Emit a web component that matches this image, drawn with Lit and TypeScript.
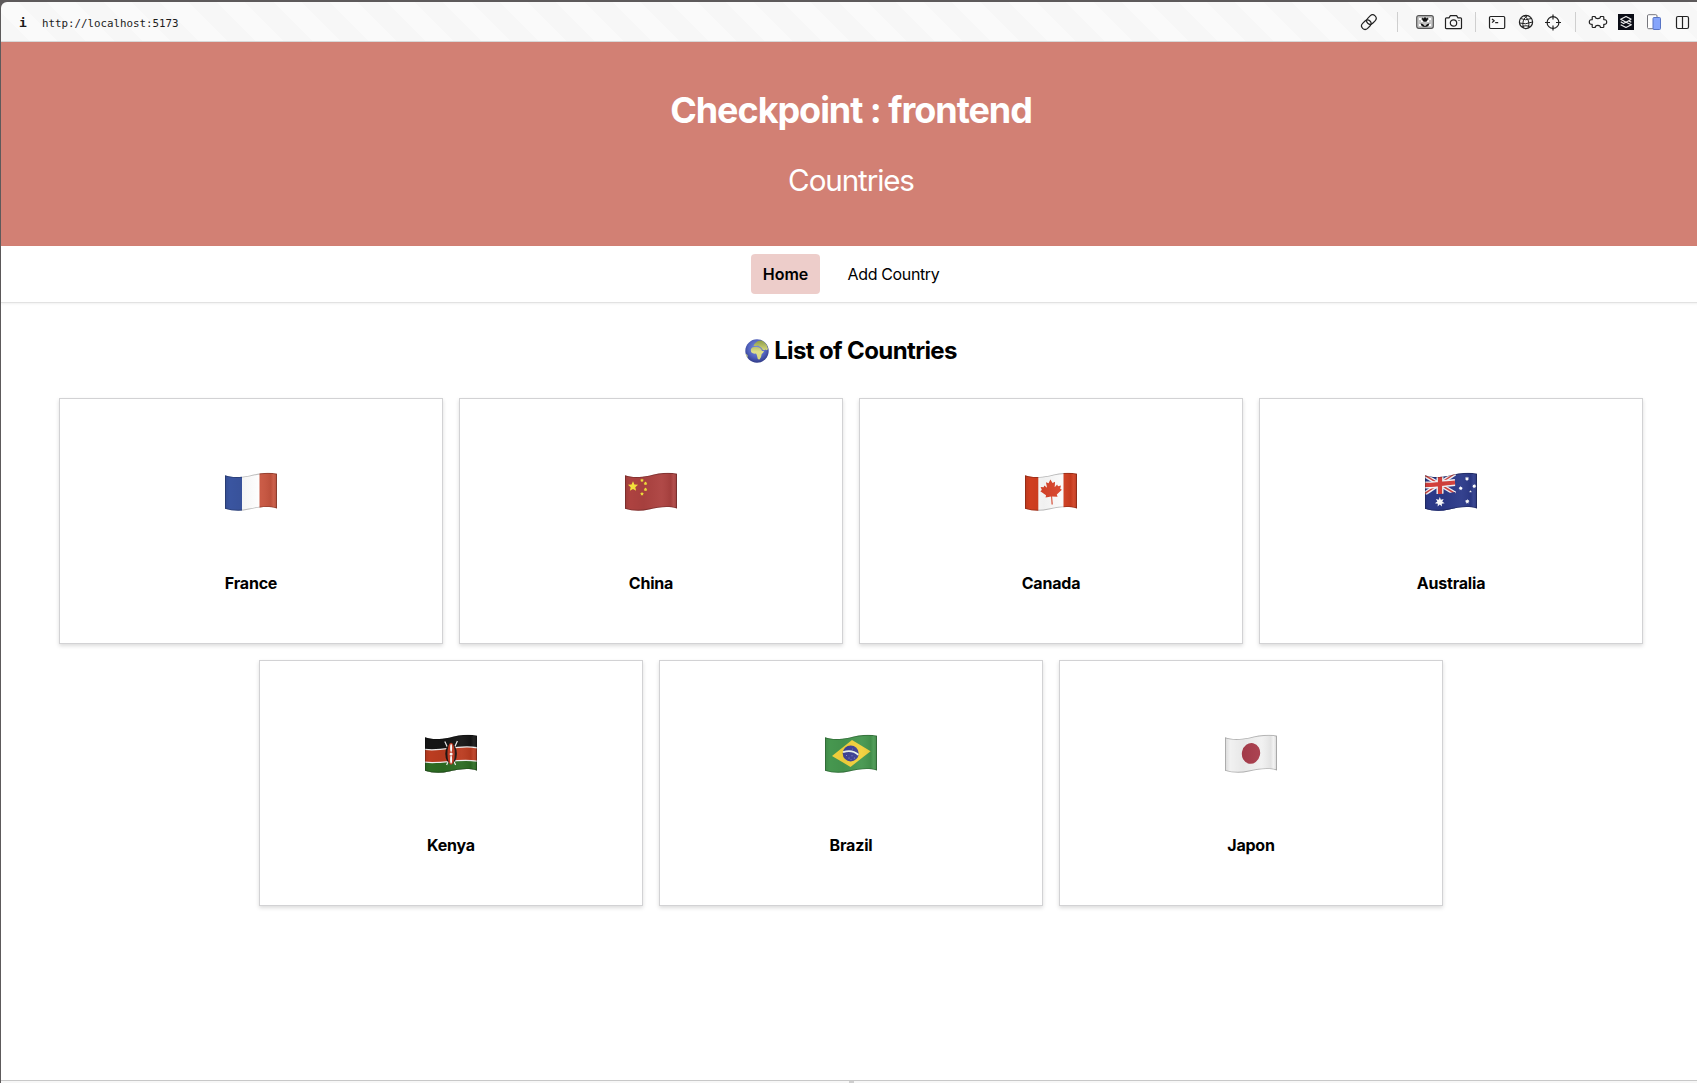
import { LitElement, html, css, svg } from "lit";
import { customElement, property } from "lit/decorators.js";

const WAVE =
  "M0 2.8C6 5 14 5.2 24 3.2C34 .6 43 -1 52 1.3V36C43 33.2 34 34.6 24 37C16 38.8 7 38.5 0 36.3Z";

const star = (cx: number, cy: number, r: number, n = 5, inner = 0.42, rot = 0) => {
  const pts: string[] = [];
  for (let i = 0; i < n * 2; i++) {
    const a = (Math.PI * i) / n - Math.PI / 2 + rot;
    const q = i % 2 ? r * inner : r;
    pts.push(`${(cx + q * Math.cos(a)).toFixed(2)},${(cy + q * Math.sin(a)).toFixed(2)}`);
  }
  return pts.join(" ");
};

const flags: Record<string, unknown> = {
  France: svg`
    <rect width="52" height="39" fill="#fff"/>
    <rect width="17" height="39" fill="#3a55a0"/>
    <rect x="34.5" width="18" height="39" fill="#c8553f"/>`,
  China: svg`
    <rect width="52" height="39" fill="#ad4240"/>
    <polygon points="${star(8, 14, 5.3, 5, 0.45)}" fill="#f4e23c"/>
    <polygon points="${star(17, 7.8, 1.9, 5, 0.6)}" fill="#f4e23c"/>
    <polygon points="${star(20.5, 11, 1.9, 5, 0.6)}" fill="#f4e23c"/>
    <polygon points="${star(20.5, 17, 1.9, 5, 0.6)}" fill="#f4e23c"/>
    <polygon points="${star(17, 21.4, 1.9, 5, 0.6)}" fill="#f4e23c"/>`,
  Canada: svg`
    <rect width="52" height="39" fill="#fafafa"/>
    <rect width="13.3" height="39" fill="#d03e20"/>
    <rect x="38.5" width="14" height="39" fill="#d03e20"/>
    <path transform="translate(26.2 19.5) rotate(-4)" fill="#d8442a"
      d="M0-12.5L2-8.8L4.6-10L3.8-4.6L6.4-7L7.2-5.2L10.2-5.8L9.2-2.6L10.8-1.4L5.4 3L6 5.2L.6 4.6L.7 12.5H-.5L-.4 4.6L-6 5.2L-5.4 3L-10.8-1.4L-9.2-2.6L-10.2-5.8L-7.2-5.2L-6.4-7L-3.8-4.6L-4.6-10L-2-8.8Z"/>`,
  Australia: svg`
    <rect width="52" height="39" fill="#2c3a8a"/>
    <path d="M0 3L30 21M0 21L30 1" stroke="#f5f5f8" stroke-width="4.2"/>
    <path d="M0 3L30 21M0 21L30 1" stroke="#cf4440" stroke-width="1.5"/>
    <path d="M15 0V21.5M0 12.4C10 13 20 10.5 30 10" stroke="#f5f5f8" stroke-width="7" fill="none"/>
    <path d="M15 0V21.5M0 12.4C10 13 20 10.5 30 10" stroke="#d5403c" stroke-width="4.2" fill="none"/>
    <path d="M0 22C10 23 20 21 30 19.5V39H0Z" fill="#2c3a8a"/>
    <g fill="#fff">
      <polygon points="${star(14.8, 29.6, 5, 7, 0.5)}"/>
      <polygon points="${star(42, 6.3, 2.3, 7, 0.55)}"/>
      <polygon points="${star(35.7, 15.8, 2.2, 7, 0.55)}"/>
      <polygon points="${star(49.3, 13.7, 2.2, 7, 0.55)}"/>
      <polygon points="${star(45.5, 19, 1.4)}"/>
      <polygon points="${star(42.3, 29, 2.4, 7, 0.55)}"/>
    </g>`,
  Kenya: svg`
    <rect width="52" height="39" fill="#151515"/>
    <path d="M0 14.3C16 16.5 34 9.5 52 12.6V39H0Z" fill="#f2f2f2"/>
    <path d="M0 15.6C16 17.8 34 10.8 52 13.9V26C34 23 16 29 0 27Z" fill="#bb3c20"/>
    <path d="M0 28.3C16 30.3 34 24.3 52 27.3V39H0Z" fill="#2c6b22"/>
    <path d="M19.8 7L30.6 30.5M32.4 6.5L21.6 30.5" stroke="#eee" stroke-width="1.2"/>
    <ellipse cx="26.1" cy="19.2" rx="5.8" ry="10" fill="#1c1412"/>
    <ellipse cx="26.1" cy="19.2" rx="3.7" ry="11" fill="#bf3a22"/>
    <ellipse cx="26.1" cy="13.5" rx="1" ry="4" fill="#fff"/>
    <ellipse cx="26.1" cy="25" rx="1" ry="4" fill="#fff"/>
    <circle cx="26.1" cy="19.4" r="1.5" fill="#fff"/>`,
  Brazil: svg`
    <rect width="52" height="39" fill="#46974f"/>
    <polygon points="7,21.5 27,5.4 45.6,16.8 25.5,32.4" fill="#f3d13c"/>
    <circle cx="25.7" cy="18.9" r="8" fill="#3f4196"/>
    <path d="M18 17.6Q27 14.6 33.4 20.2" stroke="#eef5f0" stroke-width="1.8" fill="none"/>
    <g fill="#a9aad6"><circle cx="21.5" cy="21" r=".5"/><circle cx="24" cy="23.5" r=".5"/>
    <circle cx="27" cy="21.2" r=".5"/><circle cx="29.3" cy="23.4" r=".5"/><circle cx="26" cy="25" r=".4"/><circle cx="27.5" cy="14.5" r=".4"/></g>`,
  Japon: svg`
    <rect width="52" height="39" fill="#f1f1f1"/>
    <ellipse cx="26" cy="18.9" rx="9.1" ry="10.5" fill="#a93d4c" transform="rotate(12 26 18.9)"/>`,
};

@customElement("country-card")
class CountryCard extends LitElement {
  @property() name = "";

  static styles = css`
    :host {
      box-sizing: border-box;
      width: 384px;
      height: 246px;
      border: 1px solid #d2d2d4;
      background: #fff;
      box-shadow: 0 2px 4px rgba(0, 0, 0, 0.14);
      display: flex;
      flex-direction: column;
      align-items: center;
      padding-top: 74px;
    }
    .flag {
      display: block;
      width: 52px;
      height: 39px;
      overflow: visible;
    }
    .name {
      margin-top: 61px;
      font-size: 16px;
      line-height: 20px;
      font-weight: 700;
      letter-spacing: -0.2px;
      color: #000;
    }
  `;

  render() {
    return html`
      <svg class="flag" viewBox="0 0.5 52 39">
        <defs>
          <clipPath id="wave"><path d=${WAVE} /></clipPath>
          <linearGradient id="fold">
            <stop offset="0" stop-color="#000" stop-opacity=".1" />
            <stop offset=".1" stop-color="#000" stop-opacity="0" />
            <stop offset=".35" stop-color="#000" stop-opacity=".04" />
            <stop offset=".7" stop-color="#fff" stop-opacity=".04" />
            <stop offset=".88" stop-color="#000" stop-opacity=".06" />
            <stop offset=".93" stop-color="#fff" stop-opacity=".06" />
            <stop offset="1" stop-color="#000" stop-opacity=".14" />
          </linearGradient>
        </defs>
        <g clip-path="url(#wave)">
          ${flags[this.name]}
          <rect width="52" height="39" fill="url(#fold)" />
          <path d=${WAVE} fill="none" stroke="#000" stroke-opacity=".24" stroke-width="1.8" />
        </g>
      </svg>
      <div class="name">${this.name}</div>
    `;
  }
}

interface Tool {
  gap: number;
  art?: unknown;
}

const tools: Tool[] = [
  {
    gap: 0,
    art: svg`<g transform="rotate(-45 10 10)"><rect x="1" y="6.500" width="10.400" height="7" rx="3.500"/><rect x="8.200" y="6.500" width="10.400" height="7" rx="3.500"/></g>`,
  },
  { gap: 18 },
  {
    gap: 17,
    art: svg`<rect x="1.700" y="3.700" width="16.600" height="12.600" rx="2" fill="#c4c4c4" stroke="#555"/>
      <path d="M4 6h2v2H4zM14 6h2v2h-2zM4 12h2v2H4zM14 12h2v2h-2zM6 8h2v2H6zM12 8h2v2h-2z" fill="#fff" stroke="none"/>
      <path d="M10 10v5M7 5.500l1.500 1L10 5l1.500 1.500L13 5.500c0 3-1 4.200-3 4.200S7 8.500 7 5.500ZM5.500 11.500C8 11.500 9 13 10 14.500C11 13 12 11.500 14.500 11.500C14 14 12 15 10 15S6 14 5.500 11.500Z" fill="#111" stroke="none"/>`,
  },
  {
    gap: 8,
    art: svg`<path d="M3.500 5.800H6L7.400 3.700H13.600L15 5.800H17.500Q18.500 5.800 18.500 6.800V15.700Q18.500 16.700 17.500 16.700H3.500Q2.500 16.700 2.500 15.700V6.800Q2.500 5.800 3.500 5.800Z"/><circle cx="10.500" cy="11" r="3.200"/><path d="M15.500 8.500h1"/>`,
  },
  { gap: 12 },
  {
    gap: 11,
    art: svg`<rect x="2.500" y="4.500" width="15.200" height="12" rx="1.200"/><path d="M5 7l2.200 1.800L5 10.600M8.200 10.700h3"/>`,
  },
  {
    gap: 9,
    art: svg`<circle cx="10" cy="10" r="6.600"/><path stroke-width="1" d="M4.500 6.500Q9 9 15.500 6.500M3.500 11Q9 13 16.500 10M5 14.500Q10 13 15 14.500M11.500 3.500Q5 8 7.500 16M8 3.700Q15 8 12 16.300"/>`,
  },
  {
    gap: 7,
    art: svg`<circle cx="10" cy="10.500" r="5.900"/><path d="M10 2.500v5M10 13.500v5M2 10.500h5M13 10.500h5"/>`,
  },
  { gap: 12 },
  {
    gap: 12,
    art: svg`<path d="M5 4.500H7.200Q7 6.600 9.800 6.600Q12.600 6.600 12.400 4.500H15Q15.800 4.500 15.800 5.300V7.600Q18.700 7.400 18.700 10Q18.700 12.600 15.800 12.400V14.700Q15.800 15.500 15 15.500H12.400Q12.600 13.400 9.800 13.400Q7 13.400 7.200 15.500H5Q4.200 15.500 4.200 14.700V12.400Q1.300 12.600 1.300 10Q1.300 7.400 4.200 7.600V5.300Q4.200 4.500 5 4.500Z"/>`,
  },
  {
    gap: 8,
    art: svg`<rect x="2" y="2" width="16" height="16" fill="#0b0d16" stroke="none"/><path d="M15.300 7.300L10 4.500L4.700 7.300L10 10.200L15.300 7.300M4.700 9.800L7.200 11.200M4.700 12.700L10 15.500L15.300 12.700L10 10.200L7 11.700M15.300 10.200L12.800 8.900" stroke="#eee" stroke-width="1.200"/>`,
  },
  {
    gap: 8,
    art: svg`<rect x="3.500" y="2.700" width="9.500" height="14" rx="1.200" fill="#fff" stroke="#77777d" stroke-width="1"/><rect x="9" y="5.500" width="7.500" height="12" rx="1" fill="#86a5fb" stroke="#5874c4" stroke-width="1"/>`,
  },
  {
    gap: 8,
    art: svg`<rect x="4.500" y="4.500" width="12" height="12" rx="1.500"/><path d="M10.500 4.500v12"/>`,
  },
];

@customElement("browser-bar")
class BrowserBar extends LitElement {
  static styles = css`
    :host {
      box-sizing: border-box;
      display: flex;
      align-items: center;
      height: 40px;
      padding: 1px 5px 0 18px;
      border-bottom: 1px solid #d8d8d8;
      border-top-left-radius: 6px;
      background: repeating-linear-gradient(45deg, #f7f7f7 0 20px, #fafafa 20px 40px);
      font-family: "DejaVu Sans Mono", monospace;
      color: #1c1c1c;
    }
    .info {
      width: 23px;
      padding-top: 1px;
      font-size: 13px;
      font-weight: 700;
    }
    .url {
      padding-top: 3px;
      font-size: 10.8px;
      line-height: 20px;
    }
    .tools {
      display: flex;
      align-items: center;
      margin-left: auto;
    }
    .icon {
      width: 20px;
      height: 20px;
      fill: none;
      stroke: #222;
      stroke-width: 1.2;
      stroke-linejoin: round;
    }
    .rule {
      width: 1px;
      height: 20px;
      background: #cfcfcf;
    }
  `;

  render() {
    return html`
      <span class="info">i</span>
      <span class="url">http://localhost:5173</span>
      <div class="tools">
        ${tools.map((t) =>
          t.art
            ? html`<svg class="icon" style="margin-left:${t.gap}px" viewBox="0 0 20 20">${t.art}</svg>`
            : html`<span class="rule" style="margin-left:${t.gap}px"></span>`
        )}
      </div>
    `;
  }
}

@customElement("app-root")
class AppRoot extends LitElement {
  static styles = css`
    :host {
      box-sizing: border-box;
      display: flex;
      flex-direction: column;
      width: 1697px;
      height: 1083px;
      overflow: hidden;
      padding: 2px 0 0 1px;
      background: #5d5a5b;
      font-family: Inter, "Liberation Sans", sans-serif;
      color: #000;
    }
    .page {
      flex: 1;
      width: 1700px;
      display: flex;
      flex-direction: column;
      background: #fff;
    }
    .hero {
      box-sizing: border-box;
      height: 204px;
      padding-top: 46px;
      background: #d28074;
      color: #fff;
      text-align: center;
    }
    .title {
      margin: 0;
      font-size: 36px;
      line-height: 44px;
      font-weight: 700;
      letter-spacing: -1.05px;
    }
    .subtitle {
      margin: 30px 0 0;
      font-size: 29.6px;
      line-height: 36px;
      letter-spacing: -1.1px;
    }
    .nav {
      box-sizing: border-box;
      height: 57px;
      display: flex;
      justify-content: center;
      gap: 16px;
      padding: 8px 0;
      border-bottom: 1px solid #e2e2e2;
      box-shadow: 0 1px 2px rgba(0, 0, 0, 0.06);
    }
    .link {
      display: flex;
      align-items: center;
      justify-content: center;
      box-sizing: border-box;
      height: 40px;
      font-size: 16px;
      border-radius: 4px;
    }
    .home {
      width: 69px;
      background: #edcdca;
      font-weight: 600;
    }
    .add {
      width: 115px;
      letter-spacing: -0.37px;
    }
    .heading {
      display: flex;
      align-items: center;
      justify-content: center;
      gap: 5px;
      margin: 32px 0 0;
      height: 32px;
      font-size: 24px;
      line-height: 32px;
      font-weight: 700;
      letter-spacing: -0.62px;
    }
    .globe {
      width: 24px;
      height: 24px;
      margin-top: -1px;
    }
    .cards {
      display: flex;
      flex-wrap: wrap;
      justify-content: center;
      gap: 16px;
      padding: 31px 40px 0;
    }
    .foot {
      display: flex;
      justify-content: center;
      margin-top: auto;
      height: 3px;
      box-sizing: border-box;
      border-top: 1px solid #c8c8c8;
      background: #f7f7f7;
    }
    .grip {
      width: 5px;
      height: 2px;
      background: #cfcfcf;
    }
  `;

  render() {
    return html`
      <browser-bar></browser-bar>
      <div class="page">
        <header class="hero">
          <h1 class="title">Checkpoint : frontend</h1>
          <p class="subtitle">Countries</p>
        </header>
        <nav class="nav">
          <a class="link home">Home</a>
          <a class="link add">Add Country</a>
        </nav>
        <h2 class="heading">
          <svg class="globe" viewBox="0 0 24 24">
            <defs>
              <radialGradient id="sea" cx=".5" cy=".4" r=".6">
                <stop offset="0" stop-color="#7f96dc" />
                <stop offset=".6" stop-color="#5364c0" />
                <stop offset="1" stop-color="#2f3a86" />
              </radialGradient>
              <linearGradient id="land" x2="0" y2="1">
                <stop offset="0" stop-color="#8d9c45" />
                <stop offset=".6" stop-color="#dfe08a" />
                <stop offset="1" stop-color="#d9d97a" />
              </linearGradient>
              <clipPath id="disc"><circle cx="12" cy="12" r="11.700" /></clipPath>
            </defs>
            <g clip-path="url(#disc)">
              <rect width="24" height="24" fill="url(#sea)" />
              <path fill="url(#land)"
                d="M6 10Q7 7.500 10 8Q13 7.500 15 9Q16.500 10 17 12H19Q18.500 14 16.700 15Q16.500 18 14.500 20.500Q12.500 21 12.300 18Q12 15.500 11 14.500Q8 15 6.500 13.500Q5.500 12 6 10ZM8.500 7Q9 4.500 11 3.500Q13 1 17 1.500Q22 4 23 10Q22 12 20.500 10.500Q19 12 17.500 10.500Q16.500 8.500 14.500 7.500L13 6.500L11 7ZM0 14.500L2.500 16V19L0 18Z" />
            </g>
          </svg>
          <span>List of Countries</span>
        </h2>
        <main class="cards">
          ${Object.keys(flags).map((name) => html`<country-card name=${name}></country-card>`)}
        </main>
        <div class="foot"><span class="grip"></span></div>
      </div>
    `;
  }
}
